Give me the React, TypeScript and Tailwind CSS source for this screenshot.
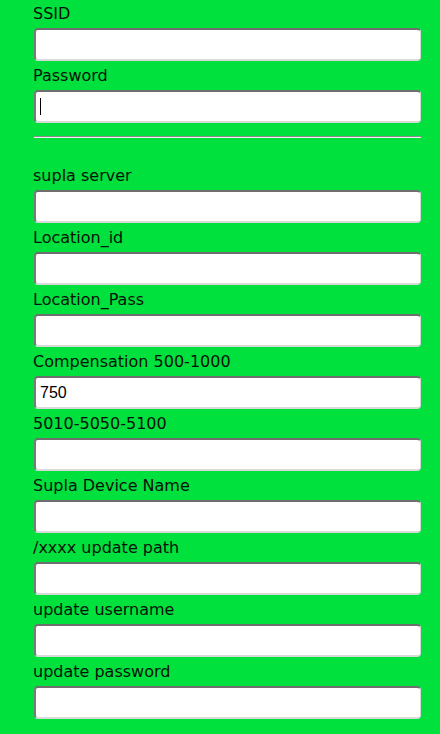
const TOP_FIELDS = [
  { label: "SSID", value: "" },
  { label: "Password", value: "", caret: true },
]

const SERVER_FIELDS = [
  { label: "supla server", value: "" },
  { label: "Location_id", value: "" },
  { label: "Location_Pass", value: "" },
  { label: "Compensation 500-1000", value: "750" },
  { label: "5010-5050-5100", value: "" },
  { label: "Supla Device Name", value: "" },
  { label: "/xxxx update path", value: "" },
  { label: "update username", value: "" },
  { label: "update password", value: "" },
]

function Field({ label, value, caret }: { label: string; value: string; caret?: boolean }) {
  return (
    <div className="flex flex-col">
      <label className="-ml-px h-[23px] text-[16px] leading-[17px] text-[#061206]">{label}</label>
      <div className="relative">
        <input
          readOnly
          value={value}
          className="box-border h-[33px] w-full rounded-[4px] border border-t-2 border-l-2 border-t-[#6e6e6e] border-l-[#7a7a7a] border-r-[#d6d6d6] border-b-2 border-b-[#d9d9d9] bg-white px-[4px] font-['Liberation_Sans',Arial,sans-serif] text-[16px] text-black outline-none"
        />
        {caret && <span className="absolute left-[6px] top-[8px] h-[17px] w-px bg-black" />}
      </div>
    </div>
  )
}

export default function App() {
  return (
    <div className="min-h-[734px] w-[440px] bg-[#00e13d] font-['DejaVu_Sans',Verdana,sans-serif]">
      <div className="flex flex-col gap-[6px] pl-[34px] pr-[19px] pt-[5px]">
        {TOP_FIELDS.map((f) => (
          <Field key={f.label} {...f} />
        ))}
      </div>
      <hr className="ml-[34px] mr-[19px] mt-[13px] border-0 border-t border-b border-t-[#8c8c8c] border-b-[#f0f0f0]" />
      <div className="flex flex-col gap-[6px] pl-[34px] pr-[19px] pt-[29px]">
        {SERVER_FIELDS.map((f) => (
          <Field key={f.label} {...f} />
        ))}
      </div>
    </div>
  )
}
